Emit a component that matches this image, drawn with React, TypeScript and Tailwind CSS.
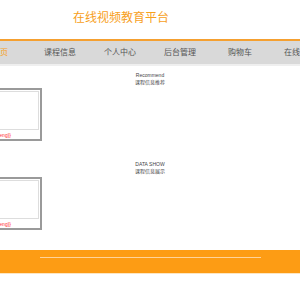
const font = { fontFamily: '"Liberation Sans", "Noto Sans CJK SC", sans-serif' };

const navItems = ["首页", "课程信息", "个人中心", "后台管理", "购物车", "在线视频"];

function Card() {
  return (
    <div className="ml-[-20px] w-[62px] h-[53px] border-2 border-[#9a9a9a] p-px bg-white">
      <div className="h-[39px] border border-[#dddddd]" />
      <div className="mt-[2px] flex justify-end pr-[28px] text-[5px] leading-[6px] text-[#ff2a2a]">
        <span className="whitespace-nowrap shrink-0">{"{{kecheng.mingcheng}}"}</span>
      </div>
    </div>
  );
}

function Section({ en, zh, children }: { en: string; zh: string; children: React.ReactNode }) {
  return (
    <div>
      <div className="text-center text-[#444] text-[5px] leading-[7px]">
        <div>{en}</div>
        <div>{zh}</div>
      </div>
      <div className="mt-[2px]">{children}</div>
    </div>
  );
}

export default function App() {
  return (
    <div className="w-[300px] h-[300px] overflow-hidden bg-white" style={font}>
      <div className="h-[39px] pl-[73px] pt-[10px]">
        <div className="text-[12px] leading-[16px] text-[#f7a01c]">在线视频教育平台</div>
      </div>
      <div className="border-t-2 border-[#f5a030] bg-[#d9d9d9] h-[25px] flex ml-[-30px]">
        {navItems.map((item, i) => (
          <div
            key={item}
            className={`w-[60px] shrink-0 flex items-center justify-center text-[8px] ${
              i === 0 ? "text-[#f7a01c]" : "text-[#555]"
            }`}
          >
            {item}
          </div>
        ))}
      </div>
      <div className="h-[2px] bg-[#efefef]" />
      <div className="pt-[6px]">
        <Section en="Recommend" zh="课程信息推荐">
          <Card />
        </Section>
        <div className="h-[20px]" />
        <Section en="DATA SHOW" zh="课程信息展示">
          <Card />
        </Section>
      </div>
      <div className="mt-[20px] h-[24px] bg-[#fd9c14] pt-[7px] border-b border-[#fde6c2]">
        <div className="ml-[40px] w-[221px] h-px bg-[#ffd39a]" />
      </div>
    </div>
  );
}
